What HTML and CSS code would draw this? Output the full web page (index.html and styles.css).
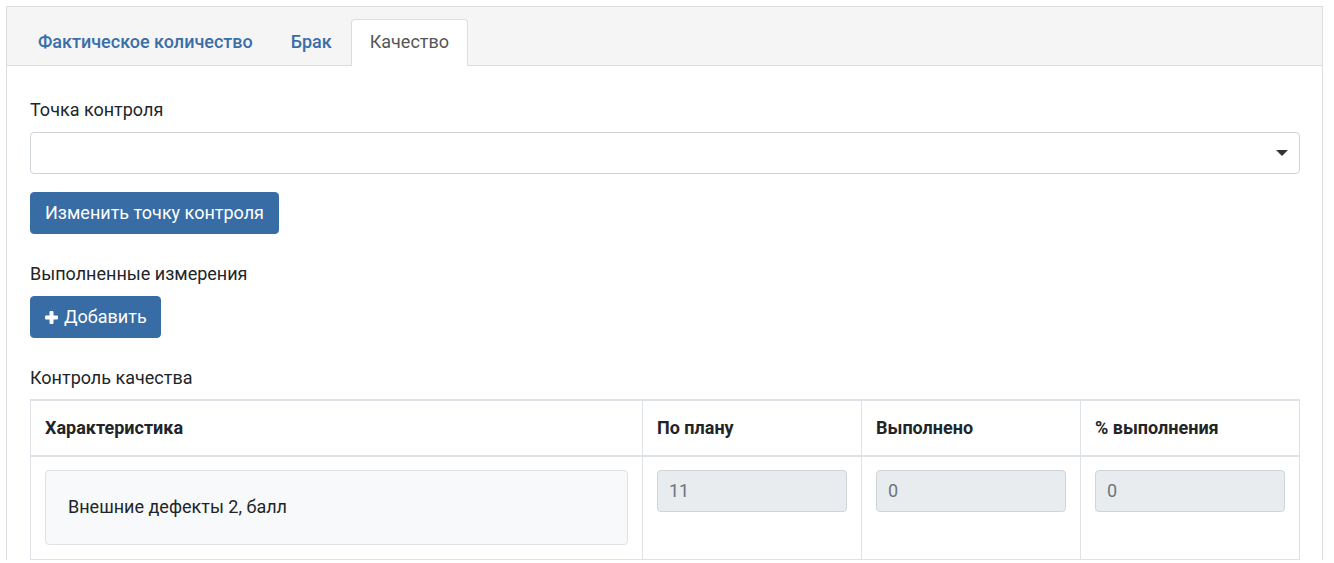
FILE: index.html
```html
<!DOCTYPE html>
<html lang="ru">
<head>
<meta charset="utf-8">
<title>Качество</title>
<link rel="stylesheet" href="styles.css">
</head>
<body>
<div class="panel">
  <div class="panel-head">
    <ul class="tabs">
      <li class="tab"><a class="tab-link">Фактическое количество</a></li>
      <li class="tab"><a class="tab-link">Брак</a></li>
      <li class="tab active"><a class="tab-link">Качество</a></li>
    </ul>
  </div>
  <div class="panel-body">
    <div class="label">Точка контроля</div>
    <div class="select">
      <svg class="caret" width="12" height="6" viewBox="0 0 12 6"><polygon points="0,0 12,0 6,6" fill="#333"/></svg>
    </div>
    <button class="btn btn-change">Изменить точку контроля</button>

    <div class="label label-gap">Выполненные измерения</div>
    <button class="btn btn-add">
      <svg class="plus" width="13" height="13" viewBox="0 0 13 13"><rect x="4.5" y="0" width="4" height="13" rx="1" fill="#fff"/><rect x="0" y="4.5" width="13" height="4" rx="1" fill="#fff"/></svg>
      <span>Добавить</span>
    </button>

    <div class="label label-gap label-table">Контроль качества</div>
    <table class="grid">
      <colgroup>
        <col class="c1"><col class="c2"><col class="c2"><col class="c2">
      </colgroup>
      <thead>
        <tr><th>Характеристика</th><th>По плану</th><th>Выполнено</th><th>% выполнения</th></tr>
      </thead>
      <tbody>
        <tr>
          <td><div class="char">Внешние дефекты 2, балл</div></td>
          <td><div class="ro">11</div></td>
          <td><div class="ro">0</div></td>
          <td><div class="ro">0</div></td>
        </tr>
      </tbody>
    </table>
  </div>
</div>
</body>
</html>
```

FILE: styles.css
```css
* { box-sizing: border-box; }
html, body { margin: 0; padding: 0; background: #fff; }
body {
  font-family: Roboto, "Liberation Sans", sans-serif;
  font-size: 18px;
  line-height: 24px;
  color: #212529;
}
.panel {
  margin: 6px 11px 0 6px;
  border: 1px solid #ddd;
  border-bottom: none;
}
.panel-head {
  background: #f5f5f5;
  border-bottom: 1px solid #ddd;
  padding: 12px 0 0 12px;
}
.tabs {
  list-style: none;
  margin: 0 0 -1px 0;
  padding: 0;
  display: flex;
}
.tab {
  margin-right: 0;
  border: 1px solid transparent;
  border-bottom: none;
  border-radius: 4px 4px 0 0;
}
.tab-link {
  display: block;
  padding: 10px 18px 12px 18px;
  color: #3a6ea8;
  font-weight: 500;
  cursor: pointer;
}
.tab.active {
  background: #fff;
  border-color: #ddd;
  height: 47px;
}
.tab.active .tab-link {
  color: #555;
  font-weight: 400;
}
.panel-body {
  padding: 32px 22px 0 23px;
}
.label {
  margin-bottom: 10px;
}
.label-gap {
  margin-top: 28px;
  margin-bottom: 10px;
}
.label-table {
  margin-bottom: 9px;
}
.select {
  height: 42px;
  border: 1px solid #ced4da;
  border-radius: 4px;
  display: flex;
  align-items: center;
  justify-content: flex-end;
  padding-right: 11px;
  margin-bottom: 18px;
}
.btn {
  display: flex;
  align-items: center;
  height: 42px;
  border: 1px solid #386ca5;
  background: #386ca5;
  color: #fff;
  font-family: inherit;
  font-size: 18px;
  line-height: 24px;
  border-radius: 4px;
  padding: 0 14px;
}
.btn-add { gap: 6px; padding: 0 13px 0 14px; }
.grid {
  width: 100%;
  border-collapse: collapse;
  table-layout: fixed;
  border-top: 2px solid #dee2e6;
}
.c1 { width: 612px; }
.c2 { width: 219px; }
.grid th, .grid td {
  border: 1px solid #dee2e6;
  text-align: left;
  vertical-align: top;
}
.grid th {
  font-weight: 700;
  border-bottom-width: 2px;
  padding: 15px 14px 15px;
}
.grid td { padding: 13px 14px 14px; }
.char {
  background: #f8f9fa;
  border: 1px solid #dee2e6;
  border-radius: 4px;
  padding: 24px 22px 25px;
}
.ro {
  background: #e9ecef;
  border: 1px solid #ced4da;
  border-radius: 4px;
  height: 42px;
  padding: 8px 11px;
  color: #6c757d;
}
```
